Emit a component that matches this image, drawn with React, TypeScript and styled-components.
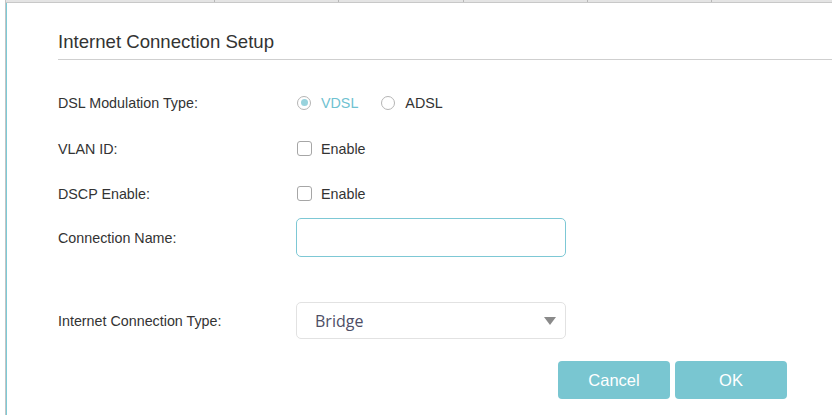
import React from 'react';
import styled, { createGlobalStyle } from 'styled-components';

const Global = createGlobalStyle`
  html, body { margin: 0; padding: 0; background: #fff; }
  body { font-family: Arial, "Liberation Sans", sans-serif; }
`;

const Page = styled.div`width:832px;height:415px;overflow:hidden;background:#fff;padding-left:5px;box-sizing:border-box;`;
const Frame = styled.div`height:100%;border-left:1px solid #c4c4c4;box-shadow:inset 1px 0 0 #7ccad6;`;
const HeadStrip = styled.div`display:flex;height:2px;background:#e4e4e4;border-bottom:1px solid #c8c8c8;`;
const HeadCell = styled.div<{ $w: number }>`width:${p => p.$w}px;border-right:1px solid #b8b8b8;flex:none;`;
const Section = styled.div`padding-left:52px;`;
const Title = styled.h2`margin:0;padding-top:27px;height:29px;line-height:24px;font-size:18.6px;font-weight:400;color:#333;border-bottom:1px solid #cfcfcf;`;
const Body = styled.div`padding-top:19px;`;
const Row = styled.div<{ $h: number; $mt?: number }>`display:flex;align-items:center;height:${p => p.$h}px;margin-top:${p => p.$mt || 0}px;`;
const Label = styled.div`width:239px;flex:none;font-size:14.3px;color:#333;padding-top:1px;`;
const Options = styled.div`display:flex;align-items:center;font-size:14.3px;color:#333;padding-top:1px;`;
const Radio = styled.span<{ $on?: boolean }>`width:12px;height:12px;border:1px solid #b5b5b5;border-radius:50%;display:inline-flex;align-items:center;justify-content:center;margin-right:10px;background:#fff;&::after{content:'';width:7px;height:7px;border-radius:50%;background:${p => p.$on ? '#98d3dd' : 'transparent'};}`;
const OptText = styled.span<{ $on?: boolean }>`color:${p => p.$on ? '#6fc2d1' : '#333'};margin-right:${p => p.$on ? 23 : 0}px;`;
const Check = styled.span`width:15px;height:15px;border:1px solid #a6a6a6;border-radius:3px;margin-right:9px;box-sizing:border-box;`;
const TextInput = styled.input`width:270px;height:39px;box-sizing:border-box;border:1px solid #7dc8d5;border-radius:5px;outline:none;padding:0 12px;font-size:15px;margin-left:-1px;`;
const SelectBox = styled.div`position:relative;width:270px;height:37px;box-sizing:border-box;border:1px solid #e2e2e2;border-radius:5px;margin-left:-1px;display:flex;align-items:center;padding-left:18px;font-family:"Open Sans","DejaVu Sans",sans-serif;font-size:16px;color:#4e4e66;`;
const Caret = styled.span`position:absolute;right:9px;top:14px;width:0;height:0;border-left:6px solid transparent;border-right:6px solid transparent;border-top:8px solid #8a8a8a;`;
const Buttons = styled.div`display:flex;justify-content:flex-end;gap:5px;padding-right:45px;margin-top:22px;`;
const Button = styled.button`width:112px;height:38px;padding-top:2px;border:none;border-radius:4px;background:#79c6d1;color:#fff;font-family:Arial,"Liberation Sans",sans-serif;font-size:16.5px;cursor:pointer;`;

const cols = [208, 123, 124, 123, 123, 124];

const App: React.FC = () => (
  <>
    <Global />
    <Page>
      <Frame>
        <HeadStrip>
          {cols.map((w, i) => <HeadCell key={i} $w={w} />)}
        </HeadStrip>
        <Section>
          <Title>Internet Connection Setup</Title>
          <Body>
            <Row $h={46}>
              <Label>DSL Modulation Type:</Label>
              <Options>
                <Radio $on />
                <OptText $on>VDSL</OptText>
                <Radio />
                <OptText>ADSL</OptText>
              </Options>
            </Row>
            <Row $h={46}>
              <Label>VLAN ID:</Label>
              <Options><Check />Enable</Options>
            </Row>
            <Row $h={44}>
              <Label>DSCP Enable:</Label>
              <Options><Check />Enable</Options>
            </Row>
            <Row $h={45}>
              <Label>Connection Name:</Label>
              <TextInput />
            </Row>
            <Row $h={37} $mt={42}>
              <Label>Internet Connection Type:</Label>
              <SelectBox>Bridge<Caret /></SelectBox>
            </Row>
          </Body>
        </Section>
        <Buttons>
          <Button>Cancel</Button>
          <Button>OK</Button>
        </Buttons>
      </Frame>
    </Page>
  </>
);

export default App;
